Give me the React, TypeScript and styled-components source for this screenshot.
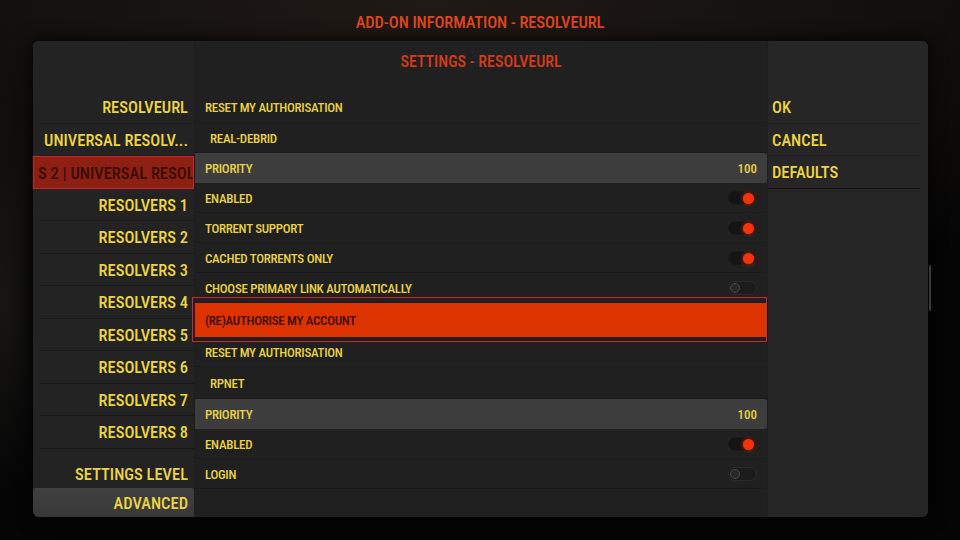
import React from "react";
import styled, { createGlobalStyle } from "styled-components";

const GlobalStyle = createGlobalStyle`
  html, body {
    margin: 0;
    padding: 0;
    width: 960px;
    height: 540px;
    overflow: hidden;
    background: #060505;
  }
  body {
    font-family: "Liberation Sans Narrow", "Roboto Condensed", "DejaVu Sans Condensed", "Liberation Sans", sans-serif;
    font-weight: 500;
  }
`;

const Screen = styled.div`
  width: 960px;
  height: 540px;
  display: flex;
  flex-direction: column;
  background:
    radial-gradient(ellipse 60px 200px at 0% 55%, rgba(60, 56, 52, 0.35), transparent 100%),
    radial-gradient(ellipse 900px 300px at 45% 0%, #201a16 0%, #0d0b0a 70%, #050505 100%);
`;

const Title = styled.div`
  height: 41px;
  box-sizing: border-box;
  padding-top: 14px;
  line-height: 18px;
  text-align: center;
  font-size: 16.5px;
  color: #e2461e;
  letter-spacing: -0.1px;
`;

const PanelWrap = styled.div`
  position: relative;
  margin-left: 33px;
  width: 895px;
  height: 476px;
`;

const Panel = styled.div`
  width: 100%;
  height: 100%;
  display: grid;
  grid-template-columns: 162px 572px 161px;
  border-radius: 6px;
  overflow: hidden;
  background: #222222;
  box-shadow: 0 0 18px rgba(0, 0, 0, 0.9), inset 0 1px 0 #2e2e2e;
`;

const ScrollBar = styled.div`
  position: absolute;
  right: -3px;
  top: 224px;
  width: 2px;
  height: 46px;
  border-radius: 1px;
  background: #3a3a3a;
`;

const LeftColumn = styled.div`
  display: flex;
  flex-direction: column;
  padding-top: 50px;
  background: #232323;
  border-right: 1px solid #1c1c1c;
`;

const CategoryItem = styled.div<{ $selected?: boolean }>`
  height: 32.5px;
  box-sizing: border-box;
  display: flex;
  align-items: center;
  justify-content: ${(p) => (p.$selected ? "flex-start" : "flex-end")};
  padding: ${(p) => (p.$selected ? "2px 0 0 4px" : "2px 6px 0 0")};
  font-size: 16.5px;
  white-space: nowrap;
  overflow: hidden;
  color: ${(p) => (p.$selected ? "#3a0c06" : "#ecd444")};
  background: ${(p) => (p.$selected ? "#8d2013" : "transparent")};
  border: ${(p) => (p.$selected ? "1.5px solid #c8262c" : "none")};
  border-bottom: ${(p) =>
    p.$selected ? "1.5px solid #c8262c" : "1px solid rgba(0, 0, 0, 0.24)"};
  margin-left: ${(p) => (p.$selected ? "0" : "7px")};
`;

const LevelLabel = styled.div`
  margin-top: auto;
  height: 30px;
  display: flex;
  align-items: center;
  justify-content: flex-end;
  padding: 2px 6px 0 0;
  box-sizing: border-box;
  font-size: 16.5px;
  color: #ecd444;
`;

const LevelValue = styled.div`
  height: 29px;
  display: flex;
  align-items: center;
  justify-content: flex-end;
  padding: 2px 6px 0 0;
  box-sizing: border-box;
  font-size: 16.5px;
  color: #ecd444;
  background: linear-gradient(#404040, #383838);
  border-radius: 3px 3px 0 6px;
`;

const MiddleColumn = styled.div`
  display: flex;
  flex-direction: column;
  background: #202020;
`;

const Heading = styled.div`
  height: 50px;
  box-sizing: border-box;
  padding-top: 11px;
  line-height: 20px;
  text-align: center;
  font-size: 16px;
  color: #d43b1b;
`;

const SettingRow = styled.div<{ $h: number; $indent?: boolean; $tint?: boolean; $focus?: boolean }>`
  position: relative;
  height: ${(p) => p.$h}px;
  box-sizing: border-box;
  display: flex;
  align-items: center;
  justify-content: space-between;
  padding: 1px 10px 0 ${(p) => (p.$indent ? 15 : 10)}px;
  font-size: 13px;
  letter-spacing: -0.3px;
  color: ${(p) => (p.$focus ? "#3e0e06" : "#e8d045")};
  background: ${(p) => (p.$focus ? "#dc3300" : p.$tint ? "#3d3d3d" : "transparent")};
  border-radius: ${(p) => (p.$tint ? "0 3px 3px 0" : "0")};
  border-bottom: 1px solid
    ${(p) => (p.$tint || p.$focus ? "transparent" : "rgba(0, 0, 0, 0.18)")};

  ${(p) =>
    p.$focus &&
    `
    &::after {
      content: "";
      position: absolute;
      top: -6px;
      bottom: -6px;
      left: -3px;
      right: 0;
      border: 1.5px solid #c42a30;
      pointer-events: none;
    }
  `}
`;

const Value = styled.span`
  font-size: 13px;
  letter-spacing: 0;
  color: #e8d045;
`;

const Track = styled.div<{ $on: boolean }>`
  position: relative;
  width: 29px;
  height: 14px;
  border-radius: 7px;
  box-sizing: border-box;
  background: ${(p) => (p.$on ? "#141414" : "#1c1c1c")};
  border: 1px solid ${(p) => (p.$on ? "#1a1a1a" : "#2a2a2a")};
`;

const Knob = styled.div<{ $on: boolean }>`
  position: absolute;
  top: 50%;
  width: ${(p) => (p.$on ? 11 : 10)}px;
  height: ${(p) => (p.$on ? 11 : 10)}px;
  margin-top: ${(p) => (p.$on ? -5.5 : -5)}px;
  border-radius: 50%;
  box-sizing: border-box;
  ${(p) =>
    p.$on
      ? `right: 2px; background: #f3330c; box-shadow: 0 0 4px rgba(255, 50, 10, 0.7);`
      : `left: 1px; background: #272727; border: 1.5px solid #484848;`}
`;

const RightColumn = styled.div`
  display: flex;
  flex-direction: column;
  padding-top: 50px;
  background: #262626;
  border-left: 1px solid #1e1e1e;
`;

const Button = styled.div<{ $last?: boolean }>`
  height: 32.5px;
  box-sizing: border-box;
  display: flex;
  align-items: center;
  padding: 2px 0 0 4px;
  margin-right: 8px;
  font-size: 16.5px;
  color: #ecd444;
  border-bottom: 1px solid ${(p) => (p.$last ? "rgba(0,0,0,0.55)" : "rgba(0,0,0,0.22)")};
`;

type Setting = {
  label: string;
  h: number;
  indent?: boolean;
  tint?: boolean;
  focus?: boolean;
  value?: string;
  toggle?: boolean;
};

const categories = [
  "RESOLVEURL",
  "UNIVERSAL RESOLV...",
  "S 2 | UNIVERSAL RESOLVERS",
  "RESOLVERS 1",
  "RESOLVERS 2",
  "RESOLVERS 3",
  "RESOLVERS 4",
  "RESOLVERS 5",
  "RESOLVERS 6",
  "RESOLVERS 7",
  "RESOLVERS 8",
];

const settings: Setting[] = [
  { label: "RESET MY AUTHORISATION", h: 32 },
  { label: "REAL-DEBRID", h: 30, indent: true },
  { label: "PRIORITY", h: 30, tint: true, value: "100" },
  { label: "ENABLED", h: 30, toggle: true },
  { label: "TORRENT SUPPORT", h: 30, toggle: true },
  { label: "CACHED TORRENTS ONLY", h: 30, toggle: true },
  { label: "CHOOSE PRIMARY LINK AUTOMATICALLY", h: 30, toggle: false },
  { label: "(RE)AUTHORISE MY ACCOUNT", h: 34, focus: true },
  { label: "RESET MY AUTHORISATION", h: 30 },
  { label: "RPNET", h: 32, indent: true },
  { label: "PRIORITY", h: 30, tint: true, value: "100" },
  { label: "ENABLED", h: 30, toggle: true },
  { label: "LOGIN", h: 30, toggle: false },
];

function Toggle({ on }: { on: boolean }) {
  return (
    <Track $on={on}>
      <Knob $on={on} />
    </Track>
  );
}

export default function App() {
  return (
    <Screen>
      <GlobalStyle />
      <Title>ADD-ON INFORMATION - RESOLVEURL</Title>
      <PanelWrap>
        <Panel>
          <LeftColumn>
            {categories.map((c, i) => (
              <CategoryItem key={c} $selected={i === 2}>
                {c}
              </CategoryItem>
            ))}
            <LevelLabel>SETTINGS LEVEL</LevelLabel>
            <LevelValue>ADVANCED</LevelValue>
          </LeftColumn>
          <MiddleColumn>
            <Heading>SETTINGS - RESOLVEURL</Heading>
            {settings.map((s, i) => (
              <SettingRow key={i} $h={s.h} $indent={s.indent} $tint={s.tint} $focus={s.focus}>
                <span>{s.label}</span>
                {s.value && <Value>{s.value}</Value>}
                {s.toggle !== undefined && <Toggle on={s.toggle} />}
              </SettingRow>
            ))}
          </MiddleColumn>
          <RightColumn>
            <Button>OK</Button>
            <Button>CANCEL</Button>
            <Button $last>DEFAULTS</Button>
          </RightColumn>
        </Panel>
        <ScrollBar />
      </PanelWrap>
    </Screen>
  );
}
